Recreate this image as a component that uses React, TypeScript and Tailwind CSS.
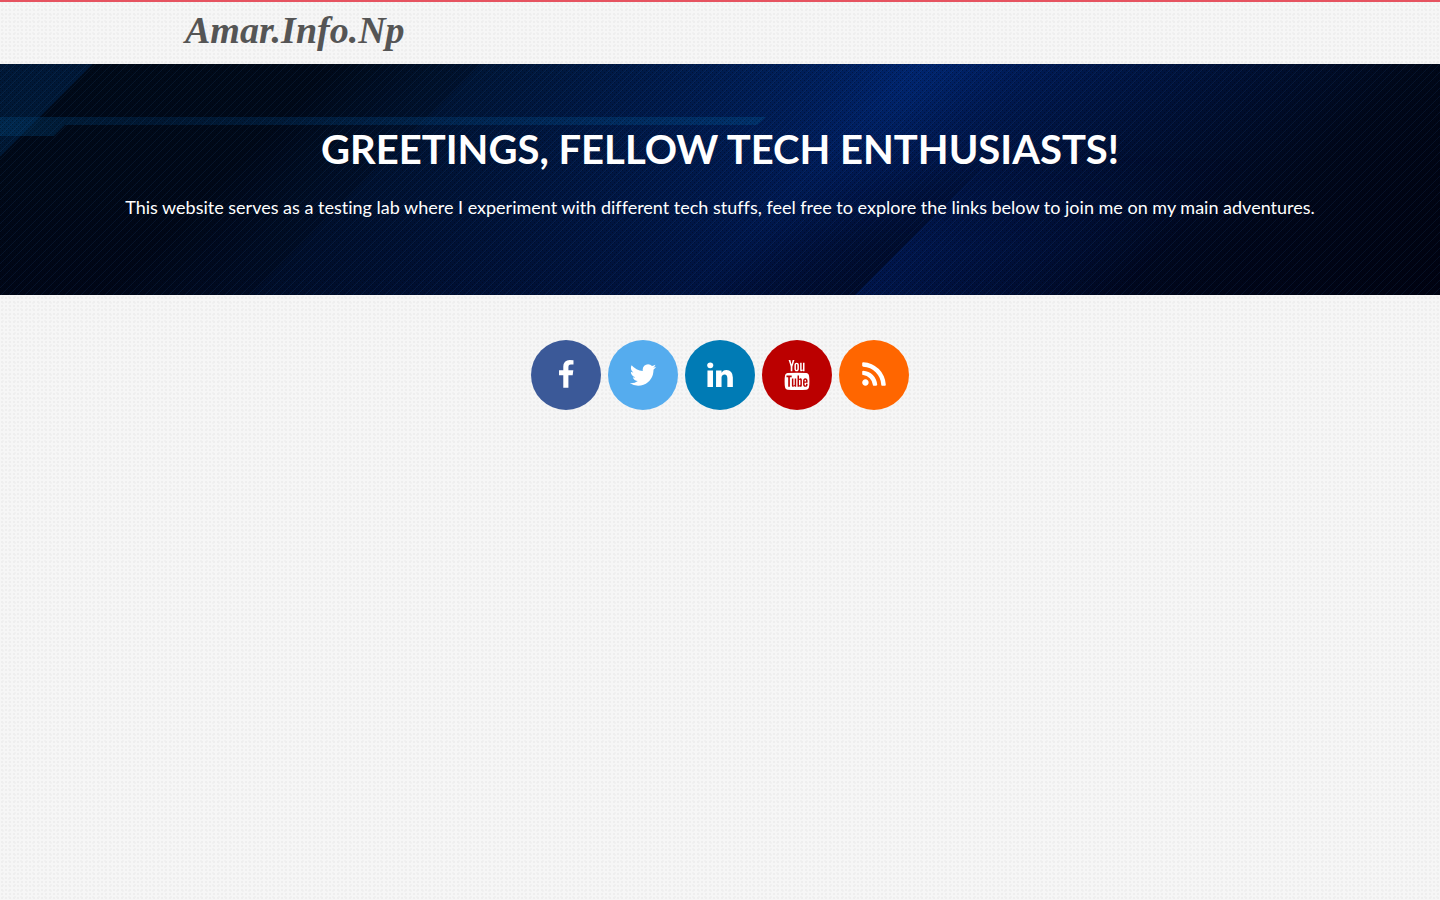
import React from "react";

type Social = { name: string; href: string; color: string; path: string };

const socials: Social[] = [
  {
    name: "Facebook",
    href: "#facebook",
    color: "bg-[#3b5998]",
    path: "M1343 12v264h-157q-86 0-116 36t-30 108v189h293l-39 296h-254v759h-306v-759h-255v-296h255v-218q0-186 104-288.5t277-102.5q147 0 228 12z",
  },
  {
    name: "Twitter",
    href: "#twitter",
    color: "bg-[#55acee]",
    path: "M1684 408q-67 98-162 167 1 14 1 42 0 130-38 259.5t-115.5 248.5-184.5 210.5-258 146-323 54.5q-271 0-496-145 35 4 78 4 225 0 401-138-105-2-188-64.5t-114-159.5q33 5 61 5 43 0 85-11-112-23-185.5-111.5t-73.5-205.5v-4q68 38 146 41-66-44-105-115t-39-154q0-88 44-163 121 149 294.5 238.5t371.5 99.5q-8-38-8-74 0-134 94.5-228.5t228.5-94.5q140 0 236 102 109-21 205-78-37 115-142 178 93-10 186-50z",
  },
  {
    name: "LinkedIn",
    href: "#linkedin",
    color: "bg-[#007bb5]",
    path: "M477 625v991h-330v-991h330zm21-306q1 73-50.5 122t-135.5 49h-2q-82 0-132-49t-50-122q0-74 51.5-122.5t134.5-48.5 133 48.5 51 122.5zm1166 729v568h-329v-530q0-105-40.5-164.5t-126.5-59.5q-63 0-105.5 34.5t-63.5 85.5q-11 30-11 81v553h-329q2-399 2-647t-1-296l-1-48h329v144h-2q20-32 41-56t56.5-52 87-43.5 114.5-15.5q171 0 275 113.5t104 332.5z",
  },
  {
    name: "YouTube",
    href: "#youtube",
    color: "bg-[#bb0000]",
    path: "M1099 1244v211q0 67-39 67-23 0-45-22v-301q22-22 45-22 39 0 39 67zm338 1v46h-90v-46q0-68 45-68t45 68zm-966-218h107v-94h-312v94h105v569h100v-569zm288 569h89v-494h-89v378q-30 42-57 42-18 0-21-21-1-3-1-35v-364h-89v391q0 49 8 73 12 37 58 37 48 0 102-61v54zm429-148v-197q0-73-9-99-17-56-71-56-50 0-93 54v-217h-89v663h89v-48q45 55 93 55 54 0 71-55 9-27 9-100zm338-10v-13h-91q0 51-2 61-7 36-40 36-46 0-46-69v-87h179v-103q0-79-27-116-39-51-106-51-68 0-107 51-28 37-28 116v173q0 79 29 116 39 51 108 51 72 0 108-53 18-27 21-54 2-9 2-58zm-608-913v-210q0-69-43-69t-43 69v210q0 70 43 70t43-70zm719 751q0 234-26 350-14 59-58 99t-102 46q-184 21-555 21t-555-21q-58-6-102.5-46t-57.5-99q-26-112-26-350 0-234 26-350 14-59 58-99t103-47q183-20 554-20t555 20q58 7 102.5 47t57.5 99q26 112 26 350zm-998-1276h102l-121 399v271h-100v-271q-14-74-61-212-37-103-65-187h106l71 263zm370 333v175q0 81-28 118-38 51-106 51-67 0-105-51-28-38-28-118v-175q0-80 28-117 38-51 105-51 68 0 106 51 28 37 28 117zm335-162v499h-91v-55q-53 62-103 62-46 0-59-37-8-24-8-75v-394h91v367q0 33 1 35 3 22 21 22 27 0 57-43v-381h91z",
  },
  {
    name: "RSS feed",
    href: "#rss",
    color: "bg-[#ff6600]",
    path: "M576 1344q0 80-56 136t-136 56-136-56-56-136 56-136 136-56 136 56 56 136zm512 123q2 28-17 48-18 21-47 21h-135q-25 0-43-16.5t-20-41.5q-22-229-184.5-391.5t-391.5-184.5q-25-2-41.5-20t-16.5-43v-135q0-29 21-47 17-17 43-17h5q160 13 306 80.5t259 181.5q114 113 181.5 259t80.5 306zm512 2q2 27-18 47-18 20-46 20h-143q-26 0-44.5-17.5t-19.5-42.5q-12-215-101-408.5t-231.5-336-336-231.5-408.5-102q-25-1-42.5-19.5t-17.5-43.5v-143q0-28 20-46 18-18 44-18h3q262 13 501.5 120t425.5 294q187 186 294 425.5t120 501.5z",
  },
];

/* Diagonal light bands over a dark blue gradient, with a fine mesh on top. */
function HeroArt() {
  return (
    <svg
      aria-hidden="true"
      className="absolute inset-0 h-full w-full"
      viewBox="0 0 1440 231"
      preserveAspectRatio="xMidYMid slice"
    >
      <defs>
        <linearGradient id="base" gradientUnits="userSpaceOnUse" x1="0" y1="0" x2="835" y2="835">
          <stop offset="0" stopColor="#000c1c" />
          <stop offset="0.2" stopColor="#000b1c" />
          <stop offset="0.27" stopColor="#001534" />
          <stop offset="0.38" stopColor="#001a48" />
          <stop offset="0.48" stopColor="#001f5a" />
          <stop offset="0.55" stopColor="#002268" />
          <stop offset="0.6" stopColor="#001c5a" />
          <stop offset="0.66" stopColor="#00174a" />
          <stop offset="0.75" stopColor="#001034" />
          <stop offset="0.85" stopColor="#00081b" />
          <stop offset="1" stopColor="#00020b" />
        </linearGradient>
        <radialGradient id="glow" gradientUnits="userSpaceOnUse" cx="0" cy="0" r="1" gradientTransform="translate(910 30) rotate(-45) scale(200 80)">
          <stop offset="0" stopColor="#003089" stopOpacity="0.3" />
          <stop offset="1" stopColor="#00246c" stopOpacity="0" />
        </radialGradient>
        <linearGradient id="shade" x1="0" x2="0" y1="0" y2="1">
          <stop offset="0" stopColor="#000318" stopOpacity="0" />
          <stop offset="1" stopColor="#000318" stopOpacity="0.5" />
        </linearGradient>
        <linearGradient id="corner" x1="0" x2="0" y1="0" y2="1">
          <stop offset="0" stopColor="#00214c" stopOpacity="0.6" />
          <stop offset="1" stopColor="#002a55" stopOpacity="0.45" />
        </linearGradient>
        <linearGradient id="beam" x1="0" x2="1" y1="0" y2="0">
          <stop offset="0" stopColor="#003f70" stopOpacity="0.4" />
          <stop offset="0.2" stopColor="#00305f" stopOpacity="0.35" />
          <stop offset="1" stopColor="#003e78" stopOpacity="0.6" />
        </linearGradient>
        <linearGradient id="band" gradientUnits="userSpaceOnUse" x1="957" y1="129" x2="1090" y2="262">
          <stop offset="0" stopColor="#001c60" stopOpacity="0.5" />
          <stop offset="1" stopColor="#001c60" stopOpacity="0" />
        </linearGradient>
        <linearGradient id="fold" gradientUnits="userSpaceOnUse" x1="883" y1="60" x2="958" y2="135">
          <stop offset="0" stopColor="#000820" stopOpacity="0" />
          <stop offset="1" stopColor="#000820" stopOpacity="0.45" />
        </linearGradient>
        <linearGradient id="foldFade" x1="0" x2="0" y1="0" y2="1">
          <stop offset="0.4" stopColor="#000" />
          <stop offset="0.8" stopColor="#fff" />
        </linearGradient>
        <mask id="lower">
          <rect width="1440" height="231" fill="url(#foldFade)" />
        </mask>
        <pattern id="mesh" width="8" height="8" patternUnits="userSpaceOnUse">
          <path d="M-1 9L9 -1M-1 1L1 -1M7 9L9 7" stroke="#3d7fc4" strokeOpacity="0.1" strokeWidth="1" />
          <path d="M0 0h1v1H0zM4 0h1v1H4zM2 2h1v1H2zM6 2h1v1H6zM0 4h1v1H0zM4 4h1v1H4zM2 6h1v1H2zM6 6h1v1H6z" fill="#000" fillOpacity="0.3" />
        </pattern>
      </defs>
      <rect width="1440" height="231" fill="url(#base)" />
      <rect width="1440" height="231" fill="url(#glow)" />
      <rect width="1440" height="231" fill="url(#shade)" />
      <path d="M0 0H481L250 231H0z" fill="#000510" opacity="0.2" />
      <g mask="url(#lower)">
        <path d="M705 231L936 0H1086L855 231z" fill="url(#fold)" />
        <path d="M855 231L1086 0H1352L1121 231z" fill="url(#band)" />
      </g>
      <path d="M0 0H93L0 93z" fill="url(#corner)" />
      <path d="M0 53H766L757 61H65L54 72H0z" fill="url(#beam)" />
      <rect width="1440" height="231" fill="url(#mesh)" />
    </svg>
  );
}

export default function App() {
  return (
    <div className="min-h-screen bg-[#f6f6f6] bg-[radial-gradient(#eeeeee_1px,transparent_1px),radial-gradient(#f1f1f1_1px,transparent_1px)] bg-[length:4px_4px,6px_6px] font-['Lato',sans-serif] [font-variant-ligatures:none]">
      <header className="border-t-2 border-[#e65360]">
        <div className="mx-auto flex h-[62px] max-w-[1170px] items-start px-[50px] pt-1">
          <a
            href="#home"
            className="font-['Liberation_Serif',serif] text-[38px] leading-[48px] font-bold whitespace-nowrap text-[#555555] italic"
          >
            Amar.Info.Np
          </a>
        </div>
      </header>

      <main>
        <section className="relative overflow-hidden bg-[#000b1f] px-5 pt-[61px] pb-[74px] text-center text-white">
          <HeroArt />
          <div className="relative">
            <h1 className="text-[40px] leading-[48px] font-bold uppercase">
              Greetings, fellow tech enthusiasts!
            </h1>
            <p className="mt-5 text-[18px] leading-7">
              This website serves as a testing lab where I experiment with different tech stuffs, feel free to explore the links below to join me on my main adventures.
            </p>
          </div>
        </section>

        <nav aria-label="Social links" className="flex flex-wrap justify-center gap-[7px] px-5 py-[45px]">
          {socials.map((s) => (
            <a
              key={s.name}
              href={s.href}
              aria-label={s.name}
              className={`flex size-[70px] items-center justify-center rounded-full text-white ${s.color}`}
            >
              <svg aria-hidden="true" viewBox="0 0 1792 1792" className="size-[30px] fill-current">
                <path d={s.path} />
              </svg>
            </a>
          ))}
        </nav>
      </main>
    </div>
  );
}
